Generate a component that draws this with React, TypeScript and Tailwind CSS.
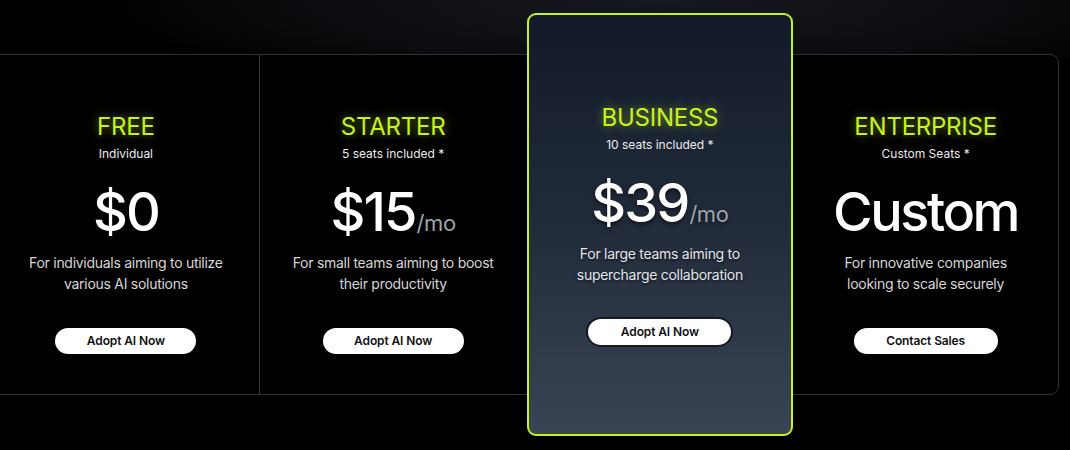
import React from "react";

type Plan = {
  name: string;
  sub: string;
  price: string;
  suffix?: string;
  desc: [string, string];
  cta: string;
  btnW: string;
  priceCls?: string;
};

const plans: Plan[] = [
  { name: "FREE", sub: "Individual", price: "$0", desc: ["For individuals aiming to utilize", "various AI solutions"], cta: "Adopt AI Now", btnW: "w-[141px]" },
  { name: "STARTER", sub: "5 seats included *", price: "$15", suffix: "/mo", desc: ["For small teams aiming to boost", "their productivity"], cta: "Adopt AI Now", btnW: "w-[141px]" },
  { name: "BUSINESS", sub: "10 seats included *", price: "$39", suffix: "/mo", desc: ["For large teams aiming to", "supercharge collaboration"], cta: "Adopt AI Now", btnW: "w-[143px]" },
  { name: "ENTERPRISE", sub: "Custom Seats *", price: "Custom", desc: ["For innovative companies", "looking to scale securely"], cta: "Contact Sales", btnW: "w-[144px]", priceCls: "tracking-[-0.045em]" },
];

function Content({ p, featured }: { p: Plan; featured?: boolean }) {
  return (
    <div className="flex flex-col items-center text-center">
      <div className="h-[32px] text-[24px] leading-[32px] tracking-[-0.01em] text-[#c8f21e] [text-shadow:0_0_10px_rgba(200,242,30,0.55)]">
        {p.name}
      </div>
      <div className="mt-[3px] h-[16px] text-[12px] leading-[16px] text-[#ececec]">{p.sub}</div>
      <div className={"mt-[23px] flex h-[54px] items-baseline leading-none " + (featured ? "[text-shadow:0_2px_4px_rgba(0,0,0,0.6)]" : "")}>
        <span className={"text-[54px] font-medium leading-none text-white " + (p.priceCls ?? "tracking-[-0.035em]")}>{p.price}</span>
        {p.suffix && <span className="ml-[1px] text-[22px] leading-none tracking-[-0.02em] text-[#9ea3ab]">{p.suffix}</span>}
      </div>
      <div className={"mt-[13px] text-[14px] leading-[21px] tracking-[-0.02em] " + (featured ? "text-[#e4e6ea] [text-shadow:0_1px_3px_rgba(0,0,0,0.7)]" : "text-[#d6d6d6]")}>
        <div>{p.desc[0]}</div>
        <div>{p.desc[1]}</div>
      </div>
      <button
        className={
          "mt-[34px] flex h-[26px] items-center justify-center rounded-full bg-white text-[12px] font-semibold tracking-[-0.01em] text-[#111] " +
          p.btnW +
          (featured ? " shadow-[0_0_0_2px_#141a24]" : "")
        }
      >
        {p.cta}
      </button>
    </div>
  );
}

export default function App() {
  return (
    <div
      className="relative h-[450px] w-[1070px] overflow-hidden bg-black"
      style={{ fontFamily: "Inter, 'Noto Sans', sans-serif" }}
    >
      <div className="pointer-events-none absolute inset-x-0 top-0 h-[60px] bg-[radial-gradient(ellipse_560px_100px_at_660px_0px,#15181d_0%,#0c0d10_60%,#000_100%)]" />
      <div className="relative ml-[-8px] mt-[54px] flex h-[341px] w-[1067px] rounded-r-[9px] border border-[#303132] bg-black">
        <div className="flex w-[267px] flex-col items-center border-r border-[#3a3b3c] pt-[56px]">
          <Content p={plans[0]} />
        </div>
        <div className="flex w-[267px] flex-col items-center pt-[56px]">
          <Content p={plans[1]} />
        </div>
        <div className="z-10 my-[-42px] flex w-[267px] flex-col items-center rounded-[9px] border-2 border-[#c8f21e] bg-[linear-gradient(180deg,#121a2a_0%,#222b3a_50%,#3a4454_100%)] pt-[87px]">
          <Content p={plans[2]} featured />
        </div>
        <div className="flex w-[265px] flex-col items-center pt-[56px]">
          <Content p={plans[3]} />
        </div>
      </div>
    </div>
  );
}
